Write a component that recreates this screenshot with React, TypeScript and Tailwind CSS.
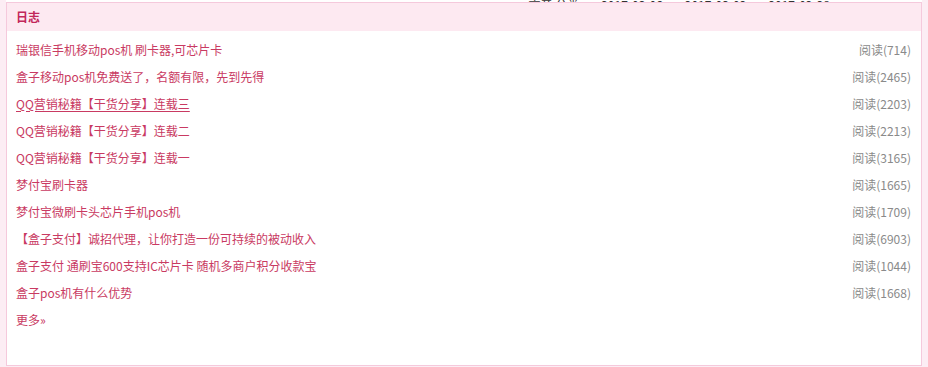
const posts = [
  { title: '瑞银信手机移动pos机 刷卡器,可芯片卡', reads: 714 },
  { title: '盒子移动pos机免费送了，名额有限，先到先得', reads: 2465 },
  { title: 'QQ营销秘籍【干货分享】连载三', reads: 2203, hover: true },
  { title: 'QQ营销秘籍【干货分享】连载二', reads: 2213 },
  { title: 'QQ营销秘籍【干货分享】连载一', reads: 3165 },
  { title: '梦付宝刷卡器', reads: 1665 },
  { title: '梦付宝微刷卡头芯片手机pos机', reads: 1709 },
  { title: '【盒子支付】诚招代理，让你打造一份可持续的被动收入', reads: 6903 },
  { title: '盒子支付 通刷宝600支持IC芯片卡 随机多商户积分收款宝', reads: 1044 },
  { title: '盒子pos机有什么优势', reads: 1668 },
];

export default function App() {
  return (
    <div
      className="w-[928px] h-[367px] overflow-hidden bg-[#fcedf4] px-[6px]"
      style={{ fontFamily: '"Noto Sans CJK SC", "Liberation Sans", sans-serif' }}
    >
      {/* bottom edge of the block above, cut off */}
      <div className="h-[2px] overflow-hidden flex items-end justify-end pr-[92px] bg-white">
        <div className="flex gap-[22px] text-[12px] leading-[12px] text-[#333] translate-y-[9px]">
          <span>文章 分类</span>
          <span>2017-03-06</span>
          <span>2017-03-02</span>
          <span>2017-02-28</span>
        </div>
      </div>
      <div className="h-[364px] border border-[#f5c9dc] bg-white">
        <div className="h-[28px] bg-[#fde9f1] px-[9px] flex items-center text-[12px] font-bold text-[#c2275a]">
          日志
        </div>
        <ul className="pl-[9px] pr-[10px] pt-[5px] text-[12px]">
          {posts.map((p) => (
            <li key={p.title} className="h-[27px] flex items-center justify-between">
              <a
                href="#"
                className={`text-[#c93a62] ${p.hover ? 'underline underline-offset-2' : 'no-underline'}`}
              >
                {p.title}
              </a>
              <span className="text-[#8a8a8a]">阅读({p.reads})</span>
            </li>
          ))}
          <li className="h-[27px] flex items-center">
            <a href="#" className="text-[#c93a62]">更多»</a>
          </li>
        </ul>
      </div>
    </div>
  );
}
